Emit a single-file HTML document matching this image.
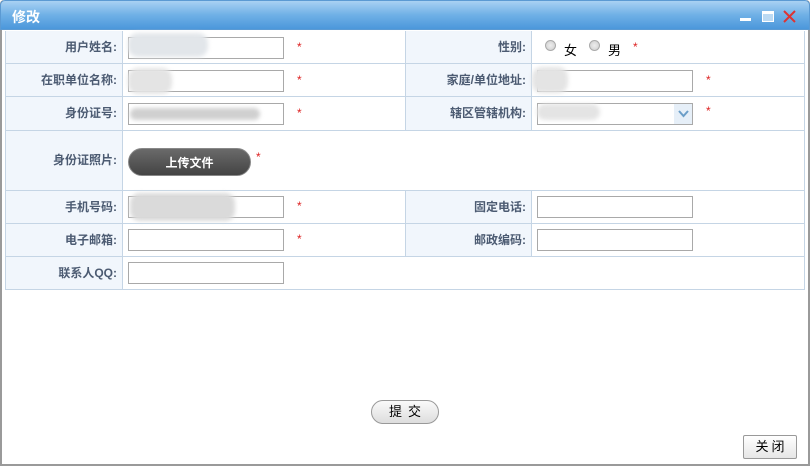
<!DOCTYPE html>
<html><head><meta charset="utf-8"><style>
*{margin:0;padding:0;box-sizing:border-box}
body{width:812px;height:468px;background:#fff;font-family:"Liberation Sans","Noto Sans CJK SC",sans-serif;font-size:12px;position:relative;overflow:hidden}
.win{position:absolute;left:0;top:0;width:810px;height:466px;border:2px solid #9a9a9a;border-top:none;border-radius:4px 4px 0 0;background:#fff}
.title{position:absolute;left:0;top:0;width:810px;height:30px;border-radius:5px 5px 0 0;background:linear-gradient(#a9d1f3,#6fb0e6 50%,#4b97db);border:1px solid #5b9ad3}
.title span{position:absolute;left:11px;top:6px;color:#fff;font-weight:bold;font-size:14px}
.a{position:absolute}
.lab{position:absolute;background:#f1f6fc;color:#4c5b72;font-weight:bold;text-align:right;padding-right:5px;border-right:1px solid #c5d5e5;border-bottom:1px solid #c5d5e5}
.inp{position:absolute;height:22px;border:1px solid #a9a9a9;background:#fff}
.st{position:absolute;color:#d22;font-size:12px}
.blur{position:absolute;background:#e4e4e4;border-radius:10px;filter:blur(2px)}
</style></head><body>
<div class="win"></div>
<div class="title"><span>修改</span>
<div class="a" style="left:739px;top:17px;width:11px;height:3px;background:#fff"></div>
<div class="a" style="left:761px;top:10px;width:12px;height:11px;border:1px solid #fff;border-top:3px solid #fff;background:#bcdaf3"></div>
<svg class="a" style="left:782px;top:9px" width="13" height="13"><path d="M1 1L12 12M12 1L1 12" stroke="#d33" stroke-width="2"/></svg>
</div>
<div class="a" style="left:5px;top:31px;width:800px;height:259px;border:1px solid #c5d5e5;border-top:none"></div>
<!-- row lines -->
<div class="a" style="left:5px;top:63px;width:800px;height:1px;background:#c5d5e5"></div>
<div class="a" style="left:5px;top:96px;width:800px;height:1px;background:#c5d5e5"></div>
<div class="a" style="left:5px;top:130px;width:800px;height:1px;background:#c5d5e5"></div>
<div class="a" style="left:5px;top:190px;width:800px;height:1px;background:#c5d5e5"></div>
<div class="a" style="left:5px;top:223px;width:800px;height:1px;background:#c5d5e5"></div>
<div class="a" style="left:5px;top:256px;width:800px;height:1px;background:#c5d5e5"></div>
<!-- labels left -->
<div class="lab" style="left:6px;top:31px;width:117px;height:33px;line-height:32px">用户姓名:</div>
<div class="lab" style="left:6px;top:64px;width:117px;height:33px;line-height:32px">在职单位名称:</div>
<div class="lab" style="left:6px;top:97px;width:117px;height:34px;line-height:33px">身份证号:</div>
<div class="lab" style="left:6px;top:131px;width:117px;height:60px;line-height:59px">身份证照片:</div>
<div class="lab" style="left:6px;top:191px;width:117px;height:33px;line-height:32px">手机号码:</div>
<div class="lab" style="left:6px;top:224px;width:117px;height:33px;line-height:32px">电子邮箱:</div>
<div class="lab" style="left:6px;top:257px;width:117px;height:33px;line-height:32px">联系人QQ:</div>
<!-- labels right -->
<div class="a" style="left:405px;top:31px;width:1px;height:99px;background:#c5d5e5"></div>
<div class="a" style="left:405px;top:190px;width:1px;height:66px;background:#c5d5e5"></div>
<div class="lab" style="left:406px;top:31px;width:126px;height:33px;line-height:32px">性别:</div>
<div class="lab" style="left:406px;top:64px;width:126px;height:33px;line-height:32px">家庭/单位地址:</div>
<div class="lab" style="left:406px;top:97px;width:126px;height:34px;line-height:33px">辖区管辖机构:</div>
<div class="lab" style="left:406px;top:191px;width:126px;height:33px;line-height:32px">固定电话:</div>
<div class="lab" style="left:406px;top:224px;width:126px;height:33px;line-height:32px">邮政编码:</div>
<!-- inputs -->
<div class="inp" style="left:128px;top:37px;width:156px"></div>
<div class="inp" style="left:128px;top:70px;width:156px"></div>
<div class="inp" style="left:128px;top:103px;width:156px"></div>
<div class="inp" style="left:128px;top:196px;width:156px"></div>
<div class="inp" style="left:128px;top:229px;width:156px"></div>
<div class="inp" style="left:128px;top:262px;width:156px"></div>
<div class="inp" style="left:537px;top:70px;width:156px"></div>
<div class="inp" style="left:537px;top:196px;width:156px"></div>
<div class="inp" style="left:537px;top:229px;width:156px"></div>
<div class="inp" style="left:537px;top:103px;width:156px"></div>
<div class="a" style="left:674px;top:104px;width:18px;height:20px;background:#e6eff8"></div>
<svg class="a" style="left:678px;top:110px" width="11" height="8"><path d="M1 1L5.5 6L10 1" stroke="#6b9ec8" stroke-width="2" fill="none"/></svg>
<!-- blurs -->
<div class="blur" style="left:128px;top:33px;width:80px;height:24px;background:#e2e6ea"></div>
<div class="blur" style="left:128px;top:68px;width:44px;height:26px"></div>
<div class="blur" style="left:130px;top:108px;width:130px;height:12px;background:#d0d0d0"></div>
<div class="blur" style="left:130px;top:193px;width:105px;height:28px;background:#dadada"></div>
<div class="blur" style="left:532px;top:67px;width:36px;height:26px"></div>
<div class="blur" style="left:537px;top:104px;width:63px;height:16px"></div>
<!-- stars -->
<div class="st" style="left:297px;top:40px">*</div>
<div class="st" style="left:297px;top:73px">*</div>
<div class="st" style="left:297px;top:106px">*</div>
<div class="st" style="left:256px;top:150px">*</div>
<div class="st" style="left:297px;top:199px">*</div>
<div class="st" style="left:297px;top:232px">*</div>
<div class="st" style="left:633px;top:40px">*</div>
<div class="st" style="left:706px;top:73px">*</div>
<div class="st" style="left:706px;top:104px">*</div>
<!-- radios -->
<div class="a" style="left:545px;top:40px;width:11px;height:11px;border-radius:50%;border:1px solid #aaa;background:radial-gradient(#eee,#ccc)"></div>
<div class="a" style="left:564px;top:40px;font-size:13px">女</div>
<div class="a" style="left:589px;top:40px;width:11px;height:11px;border-radius:50%;border:1px solid #aaa;background:radial-gradient(#eee,#ccc)"></div>
<div class="a" style="left:608px;top:40px;font-size:13px">男</div>
<!-- upload -->
<div class="a" style="left:128px;top:148px;width:123px;height:28px;border-radius:14px;background:linear-gradient(#6a6a6a,#444);color:#fff;font-weight:bold;text-align:center;line-height:28px;border:1px solid #888">上传文件</div>
<!-- buttons -->
<div class="a" style="left:371px;top:400px;width:68px;height:24px;border-radius:12px;border:1px solid #999;background:linear-gradient(#fafafa,#ddd);text-align:center;line-height:22px;font-size:13px;letter-spacing:6px;padding-left:6px">提交</div>
<div class="a" style="left:743px;top:435px;width:54px;height:24px;border:1px solid #999;border-radius:2px;background:linear-gradient(#fff,#e6e6e6);text-align:center;line-height:22px;font-size:13px;letter-spacing:3px;padding-left:3px">关闭</div>
</body></html>
